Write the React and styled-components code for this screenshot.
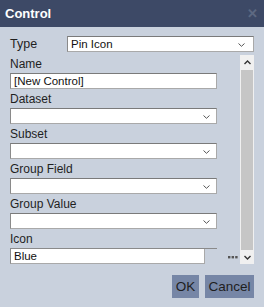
import React from "react";
import styled, { createGlobalStyle } from "styled-components";

const GlobalStyle = createGlobalStyle`
  html, body { margin: 0; padding: 0; background: #c9d1dd; }
  * { box-sizing: border-box; }
`;

const Dialog = styled.div`
  width: 264px;
  height: 307px;
  background: #c9d1dd;
  display: flex;
  flex-direction: column;
  font-family: "Liberation Sans", Arial, sans-serif;
  color: #1f1f1f;
  overflow: hidden;
`;

const TitleBar = styled.div`
  height: 27px;
  background: #3d4966;
  display: flex;
  align-items: center;
  justify-content: space-between;
  padding: 0 5px;
  color: #fff;
  font-size: 13px;
  font-weight: bold;
`;

const Close = styled.span`
  color: #5d6982;
  font-size: 13px;
  font-weight: bold;
  margin-right: 1px;
`;

const Body = styled.div`
  flex: 1;
  display: flex;
  flex-direction: column;
  padding: 9px 10px 0 10px;
`;

const TypeRow = styled.div`
  display: flex;
  align-items: center;
  height: 16px;
`;

const TypeLabel = styled.div`
  width: 57px;
  font-size: 12.5px;
`;

const Box = styled.div`
  position: relative;
  height: ${(p) => p.$h || 16}px;
  width: ${(p) => p.$w}px;
  background: #fff;
  border: 1px solid #a9a9a9;
  border-top-color: ${(p) => (p.$noTop ? "transparent" : "#7a7a7a")};
  border-top-width: ${(p) => (p.$noTop ? 0 : 1)}px;
  border-left-color: #8a8a8a;
  display: flex;
  align-items: center;
  padding: 0 3px;
  font-size: 11.5px;
  color: #111;
  white-space: nowrap;
`;

const Chevron = styled.svg`
  position: absolute;
  right: ${(p) => p.$right}px;
  top: 6px;
`;

const ScrollRow = styled.div`
  display: flex;
  margin-top: 2px;
  height: 210px;
`;

const Fields = styled.div`
  width: 230px;
  display: flex;
  flex-direction: column;
`;

const Label = styled.div`
  height: 19px;
  line-height: 21px;
  font-size: 12px;
`;

const IconRow = styled.div`
  display: flex;
  align-items: center;
  width: 230px;
`;

const IconWrap = styled.div`
  width: 207px;
  border-top: 1px solid #8a8a8a;
`;

const Dots = styled.svg`
  margin-left: 11px;
  margin-top: 2px;
`;

const Scrollbar = styled.div`
  width: 14px;
  margin-top: 1px;
  display: flex;
  flex-direction: column;
  background: #f0f0f0;
`;

const Arrow = styled.div`
  height: ${(p) => p.$h}px;
  display: flex;
  align-items: center;
  justify-content: center;
  background: #f0f0f0;
`;

const Thumb = styled.div`
  flex: 1;
  background: #c6c6c6;
  margin: 0 1px;
`;

const Footer = styled.div`
  display: flex;
  justify-content: flex-end;
  gap: 6px;
  margin-top: 11px;
`;

const Button = styled.button`
  height: 23px;
  width: ${(p) => p.$w}px;
  background: #7686a6;
  border: none;
  padding: 0;
  font-family: "Liberation Sans", Arial, sans-serif;
  font-size: 13.5px;
  color: #1e1e1e;
`;

const Down = ({ right = 6 }) => (
  <Chevron $right={right} width="7" height="4" viewBox="0 0 7 4">
    <path d="M0.5 0.5 L3.5 3.3 L6.5 0.5" fill="none" stroke="#555" strokeWidth="1" />
  </Chevron>
);

const fields = [
  { label: "Name", value: "[New Control]", select: false },
  { label: "Dataset", value: "", select: true },
  { label: "Subset", value: "", select: true },
  { label: "Group Field", value: "", select: true },
  { label: "Group Value", value: "", select: true },
];

export default function App() {
  return (
    <>
      <GlobalStyle />
      <Dialog>
        <TitleBar>
          Control
          <Close>✕</Close>
        </TitleBar>
        <Body>
          <TypeRow>
            <TypeLabel>Type</TypeLabel>
            <Box $w={187}>
              Pin Icon
              <Down right={8} />
            </Box>
          </TypeRow>
          <ScrollRow>
            <Fields>
              {fields.map((f) => (
                <div key={f.label}>
                  <Label>{f.label}</Label>
                  <Box $w={207}>
                    {f.value}
                    {f.select && <Down />}
                  </Box>
                </div>
              ))}
              <Label>Icon</Label>
              <IconRow>
                <IconWrap>
                  <Box $w={195} $h={15} $noTop>
                    Blue
                  </Box>
                </IconWrap>
                <Dots width="10" height="3" viewBox="0 0 10 3">
                  <rect x="0" y="0" width="2.4" height="2.4" fill="#555" />
                  <rect x="3.6" y="0" width="2.4" height="2.4" fill="#555" />
                  <rect x="7.2" y="0" width="2.4" height="2.4" fill="#555" />
                </Dots>
              </IconRow>
            </Fields>
            <Scrollbar>
              <Arrow $h={15}>
                <svg width="7" height="5" viewBox="0 0 7 5">
                  <path d="M0.5 4 L3.5 1 L6.5 4" fill="none" stroke="#333" strokeWidth="1.4" />
                </svg>
              </Arrow>
              <Thumb />
              <Arrow $h={14}>
                <svg width="7" height="5" viewBox="0 0 7 5">
                  <path d="M0.5 1 L3.5 4 L6.5 1" fill="none" stroke="#333" strokeWidth="1.4" />
                </svg>
              </Arrow>
            </Scrollbar>
          </ScrollRow>
          <Footer>
            <Button $w={27}>OK</Button>
            <Button $w={49}>Cancel</Button>
          </Footer>
        </Body>
      </Dialog>
    </>
  );
}
